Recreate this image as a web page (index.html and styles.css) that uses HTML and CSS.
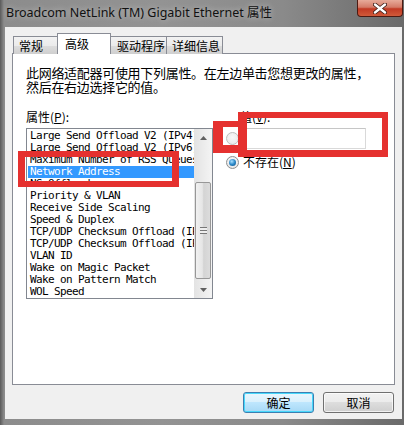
FILE: index.html
```html
<!DOCTYPE html>
<html lang="zh-CN">
<head>
<meta charset="utf-8">
<title>Broadcom NetLink (TM) Gigabit Ethernet 属性</title>
<link rel="stylesheet" href="styles.css">
</head>
<body>
<div class="window">
  <div class="titlebar">
    <div class="title">Broadcom NetLink (TM) Gigabit Ethernet 属性</div>
    <div class="close">
      <svg width="14" height="11" viewBox="0 0 14 11"><path d="M2 1.5 L12 9.5 M12 1.5 L2 9.5" stroke="#3a1a14" stroke-width="4" stroke-linecap="round"/><path d="M2 1.5 L12 9.5 M12 1.5 L2 9.5" stroke="#ffffff" stroke-width="2.4" stroke-linecap="round"/></svg>
    </div>
  </div>
  <div class="client">
    <div class="tabs">
      <div class="tab t1">常规</div>
      <div class="tab t2 active">高级</div>
      <div class="tab t3">驱动程序</div>
      <div class="tab t4">详细信息</div>
    </div>
    <div class="panel">
      <p class="desc"><span class="line">此网络适配器可使用下列属性。在左边单击您想更改的属性，</span><span class="line">然后在右边选择它的值。</span></p>
      <div class="props">
        <div class="left">
          <div class="label">属性(<u>P</u>):</div>
          <div class="listbox">
            <ul class="items">
              <li>Large Send Offload V2 (IPv4)</li>
              <li>Large Send Offload V2 (IPv6)</li>
              <li>Maximum Number of RSS Queues</li>
              <li class="sel">Network Address</li>
              <li>NS Offload</li>
              <li>Priority &amp; VLAN</li>
              <li>Receive Side Scaling</li>
              <li>Speed &amp; Duplex</li>
              <li>TCP/UDP Checksum Offload (IPv4)</li>
              <li>TCP/UDP Checksum Offload (IPv6)</li>
              <li>VLAN ID</li>
              <li>Wake on Magic Packet</li>
              <li>Wake on Pattern Match</li>
              <li>WOL Speed</li>
            </ul>
            <div class="scrollbar">
              <div class="arrow up"><svg width="7" height="4" viewBox="0 0 7 4"><path d="M0 4 L3.5 0 L7 4Z" fill="#606060"/></svg></div>
              <div class="track"><div class="thumb"><span class="grip"></span></div></div>
              <div class="arrow down"><svg width="7" height="4" viewBox="0 0 7 4"><path d="M0 0 L3.5 4 L7 0Z" fill="#606060"/></svg></div>
            </div>
          </div>
        </div>
        <div class="right">
          <div class="vlabel">值(<u>V</u>):</div>
          <div class="vrow">
            <span class="radio disabled"></span>
            <span class="edit"></span>
          </div>
          <div class="nrow">
            <span class="radio checked"></span>
            <span class="nlabel">不存在(<u>N</u>)</span>
          </div>
        </div>
      </div>
    </div>
    <div class="footer">
      <button class="btn default">确定</button>
      <button class="btn">取消</button>
    </div>
  </div>
  <div class="mark mark-a"></div>
  <div class="mark mark-b"></div>
  <div class="mark mark-c"></div>
</div>
</body>
</html>
```
FILE: styles.css
```css
html, body {
  margin: 0;
  padding: 0;
  background: #202020;
}
body {
  width: 404px;
  height: 425px;
  overflow: hidden;
  font-family: "Noto Sans CJK SC", "Noto Sans", sans-serif;
}
.window {
  position: relative;
  width: 404px;
  height: 425px;
  display: flex;
  flex-direction: column;
  background: linear-gradient(90deg, #5a5a5a 0px, #8c8c8c 4px, #939393 40%, #8a8a8a 70%, #6a6a6a 100%);
  box-sizing: border-box;
}
.titlebar {
  height: 27px;
  display: flex;
  align-items: flex-start;
  flex: none;
}
.title {
  padding: 4px 0 0 6px;
  font-family: "Noto Sans", "Noto Sans CJK SC", sans-serif;
  font-size: 12.5px;
  line-height: 17px;
  color: #111;
  text-shadow: 0 0 6px rgba(255,255,255,0.55);
}
.close {
  margin-left: auto;
  margin-right: 1px;
  width: 46px;
  height: 17px;
  box-sizing: border-box;
  border: 1px solid #4d1a12;
  border-top: none;
  border-radius: 0 0 4px 4px;
  background: linear-gradient(180deg, #e7ab9a 0%, #d47b68 45%, #c23a24 55%, #d15a3a 100%);
  display: flex;
  align-items: center;
  justify-content: center;
}
.client {
  flex: 1;
  margin: 0 2px 6px 5px;
  background: #f0f0f0;
  padding: 6px 7px 0 7px;
  display: flex;
  flex-direction: column;
  box-sizing: border-box;
}
.tabs {
  display: flex;
  align-items: flex-end;
  height: 21px;
  padding-left: 1px;
  position: relative;
  z-index: 1;
  margin-bottom: -1px;
}
.tab {
  height: 18px;
  box-sizing: border-box;
  border: 1px solid #898c95;
  border-bottom: none;
  background: linear-gradient(180deg, #f2f2f2 0%, #ebebeb 50%, #dddddd 51%, #cfcfcf 100%);
  font-size: 12px;
  line-height: 17px;
  color: #000;
  padding-left: 5px;
  margin-right: -1px;
}
.t1 { width: 46px; }
.t2 { width: 54px; }
.t3 { width: 58px; padding-left: 7px; }
.t4 { width: 57px; padding-left: 5px; }
.tab.active {
  height: 21px;
  background: #ffffff;
  padding-left: 7px;
  line-height: 19px;
  position: relative;
  z-index: 2;
  margin-left: -1px;
  margin-right: -2px;
}
.panel {
  height: 332px;
  box-sizing: border-box;
  border: 1px solid #898c95;
  background: #ffffff;
  padding: 11px 0 0 13px;
}
.desc {
  margin: 0;
  font-size: 13px;
  color: #000;
  letter-spacing: -0.3px;
  display: flex;
  flex-direction: column;
}
.desc .line {
  display: block;
  height: 14px;
  line-height: 15px;
  white-space: nowrap;
}
.props {
  display: flex;
  margin-top: 17px;
}
.left {
  width: 187px;
}
.label {
  font-size: 12px;
  line-height: 14px;
  height: 14px;
}
.listbox {
  margin-top: 4px;
  width: 187px;
  height: 171px;
  box-sizing: border-box;
  border: 1px solid #828790;
  display: flex;
  background: #fff;
}
.items {
  list-style: none;
  margin: 0;
  padding: 1px 0 0 1px;
  flex: 1;
  min-width: 0;
  overflow: hidden;
}
.items li {
  height: 12px;
  line-height: 12px;
  font-family: "DejaVu Sans Mono", "Liberation Mono", monospace;
  font-size: 11px;
  letter-spacing: -0.62px;
  white-space: nowrap;
  padding-left: 2px;
  color: #000;
  overflow: hidden;
  text-overflow: clip;
}
.items li.sel {
  background: #3399ff;
  color: #fff;
}
.scrollbar {
  width: 18px;
  flex: none;
  display: flex;
  flex-direction: column;
  background: linear-gradient(90deg, #e3e3e3, #f4f4f4);
}
.arrow {
  height: 17px;
  display: flex;
  align-items: center;
  justify-content: center;
  flex: none;
}
.track {
  flex: 1;
  padding-top: 36px;
  padding-bottom: 2px;
  display: flex;
  flex-direction: column;
}
.thumb {
  height: 97px;
  margin: 0 1px;
  box-sizing: border-box;
  border: 1px solid #979797;
  border-radius: 2px;
  background: linear-gradient(90deg, #f1f1f1 0%, #e6e6e6 45%, #d4d4d4 55%, #dcdcdc 100%);
  display: flex;
  align-items: center;
  justify-content: center;
}
.grip {
  width: 7px;
  height: 7px;
  background: repeating-linear-gradient(180deg, #777 0 1px, #eee 1px 3px);
}
.right {
  margin-left: 13px;
  position: relative;
}
.vlabel {
  font-size: 12px;
  line-height: 14px;
  padding-left: 14px;
}
.vrow {
  display: flex;
  align-items: center;
  margin-top: 4px;
  height: 21px;
}
.radio {
  width: 13px;
  height: 13px;
  box-sizing: border-box;
  border-radius: 50%;
  border: 1px solid #8e8f8f;
  background: radial-gradient(circle at 50% 40%, #ffffff 0%, #e8e8e8 70%, #d6d6d6 100%);
  flex: none;
  position: relative;
}
.radio.disabled {
  border-color: #bdbdbd;
  background: radial-gradient(circle at 50% 40%, #f8f8f8, #e6e6e6);
}
.radio.checked::after {
  content: "";
  position: absolute;
  left: 2px;
  top: 2px;
  width: 7px;
  height: 7px;
  border-radius: 50%;
  background: radial-gradient(circle at 40% 35%, #a9e0ff 0%, #2a88c8 50%, #0d4c80 100%);
}
.edit {
  margin-left: 6px;
  width: 121px;
  height: 21px;
  box-sizing: border-box;
  border: 1px solid #d9d9d9;
  border-top-color: #c6c6c6;
  background: #fff;
}
.nrow {
  display: flex;
  align-items: center;
  margin-top: 6px;
  height: 14px;
}
.nlabel {
  margin-left: 4px;
  font-size: 12px;
  line-height: 14px;
}
.footer {
  flex: 1;
  display: flex;
  justify-content: flex-end;
  align-items: flex-start;
  padding-top: 7px;
  gap: 9px;
}
.btn {
  width: 71px;
  height: 21px;
  box-sizing: border-box;
  border: 1px solid #707070;
  border-radius: 3px;
  background: linear-gradient(180deg, #f2f2f2 0%, #ebebeb 49%, #dddddd 50%, #cfcfcf 100%);
  font-family: "Noto Sans CJK SC", sans-serif;
  font-size: 12px;
  line-height: 17px;
  padding: 0;
  color: #000;
  box-shadow: inset 0 0 0 1px rgba(255,255,255,0.7);
}
.btn.default {
  border-color: #3c7fb1;
  background: linear-gradient(180deg, #eaf6fd 0%, #d9f0fc 49%, #bee6fd 50%, #a7d9f5 100%);
  box-shadow: inset 0 0 0 1px #48d8fb;
}
.btn:last-child { margin-right: 1px; }
.mark {
  position: absolute;
  border-style: solid;
  border-color: #e5312f;
  box-sizing: border-box;
}
.mark-a {
  left: 18px;
  top: 151px;
  width: 161px;
  height: 36px;
  border-width: 6px 7px 6px 7px;
}
.mark-b {
  left: 213px;
  top: 121px;
  width: 34px;
  height: 32px;
  border-width: 6px 0 8px 10px;
}
.mark-c {
  left: 238px;
  top: 112px;
  width: 150px;
  height: 45px;
  border-width: 6px 6px 7px 9px;
}
```
